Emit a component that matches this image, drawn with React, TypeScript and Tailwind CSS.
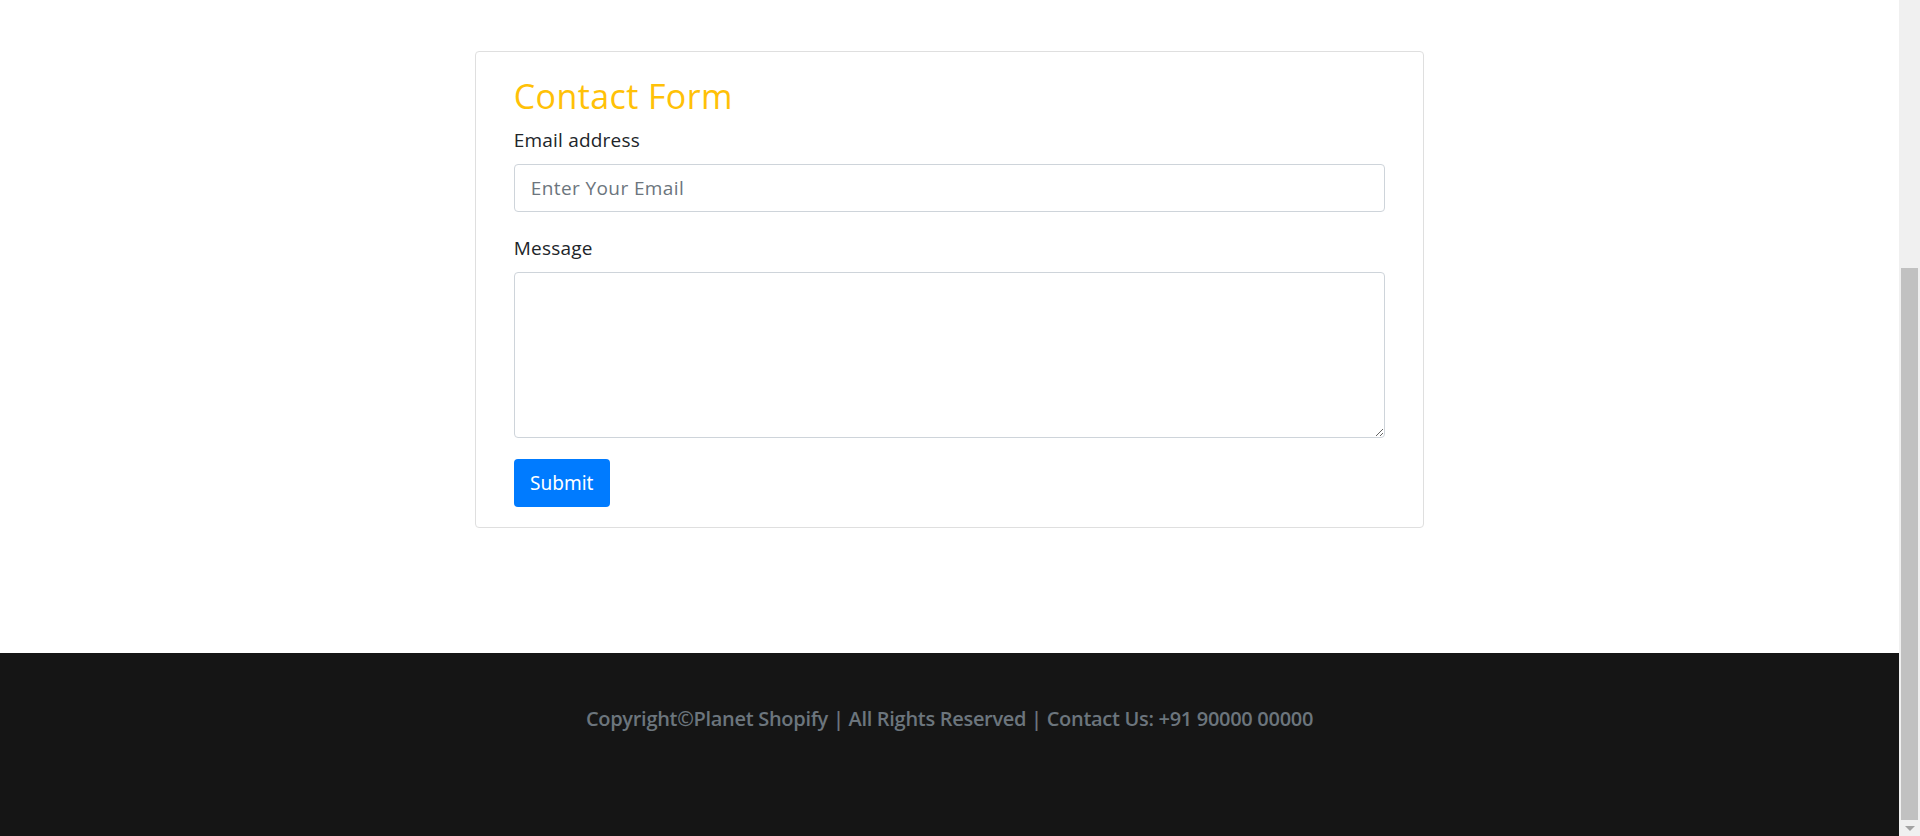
import { useState } from "react";

const ContactCard: React.FC = () => {
    const [email, setEmail] = useState<string>("");
    const [message, setMessage] = useState<string>("");

    return (
        <div className="w-1/2 mx-auto border border-[#dfdfdf] rounded-[4px] px-[38px] pt-[24px] pb-[20px]">
            <h2 className="text-[34px] leading-[41px] tracking-[0.4px] text-[#ffc107]">Contact Form</h2>
            <form onSubmit={(e) => e.preventDefault()}>
                <label className="block mt-[9px] text-[19px] leading-[28px] tracking-[0.2px] text-[#212529]">Email address</label>
                <input
                    type="email"
                    placeholder="Enter Your Email"
                    value={email}
                    onChange={(e) => setEmail(e.target.value)}
                    className="block w-full h-[48px] mt-[10px] px-[16px] text-[19px] tracking-[0.4px] text-[#495057] border border-[#ced4da] rounded-[4px] placeholder:text-[#6c757d] focus:outline-none"
                />
                <label className="block mt-[22px] text-[19px] leading-[28px] tracking-[0.2px] text-[#212529]">Message</label>
                <textarea
                    value={message}
                    onChange={(e) => setMessage(e.target.value)}
                    className="block w-full h-[166px] mt-[10px] px-[16px] py-[8px] text-[19px] border border-[#ced4da] rounded-[4px] focus:outline-none"
                />
                <button
                    type="submit"
                    className="block mt-[21px] w-[96px] h-[48px] rounded-[4px] bg-[#007bff] text-white text-[19px] font-['Noto_Sans',sans-serif]"
                >
                    Submit
                </button>
            </form>
        </div>
    );
};

const FakeScrollbar: React.FC = () => (
    <div className="w-[21px] shrink-0 bg-[#f0f0f0] flex flex-col items-center">
        <div className="h-[268px]"></div>
        <div className="w-[17px] h-[552px] bg-[#c1c1c1]"></div>
        <div className="mt-[6px] w-0 h-0 border-l-[5px] border-r-[5px] border-t-[5px] border-l-transparent border-r-transparent border-t-[#a3a3a3]"></div>
    </div>
);

export default function App() {
    return (
        <div className="flex w-full h-[836px] overflow-hidden bg-white font-['Open_Sans',sans-serif]">
            <div className="flex-1 flex flex-col">
                <div className="flex-1 pt-[51px]">
                    <ContactCard />
                </div>
                <footer className="h-[183px] bg-[#151515] pt-[51px]">
                    <p className="text-center text-[20px] font-semibold tracking-[-0.3px] text-[#6c757d]">
                        Copyright©Planet Shopify | All Rights Reserved | Contact Us: +91 90000 00000
                    </p>
                </footer>
            </div>
            <FakeScrollbar />
        </div>
    );
}
